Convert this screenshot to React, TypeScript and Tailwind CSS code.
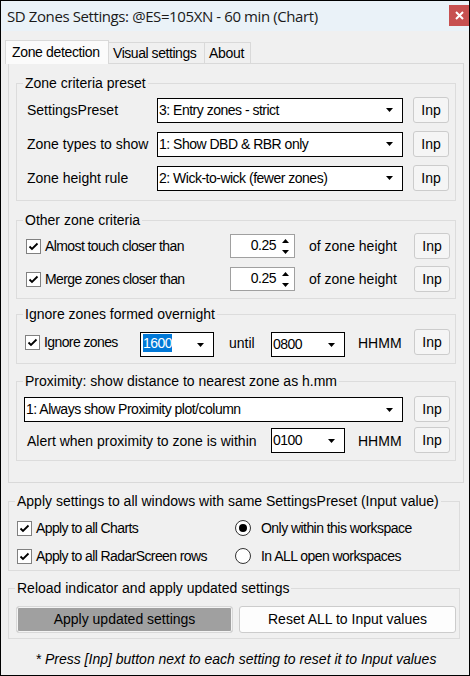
import React from "react";

const Tri = () => (
  <svg width="7" height="4" viewBox="0 0 7 4" className="shrink-0">
    <path d="M0 0H7L3.5 4Z" fill="#000" />
  </svg>
);

function Combo({ w, text, hl, top }: { w: string; text: string; hl?: boolean; top?: boolean }) {
  return (
    <div
      className={`${w} h-[25px] shrink-0 border border-black bg-white flex justify-between pr-[9px] ${
        top ? "pt-[1px]" : "items-center"
      }`}
    >
      <span
        className={`${hl ? "bg-[#0078d7] text-white ml-[2px] px-[0px] h-[18px] leading-[18px]" : "ml-[1px]"} tracking-[-0.5px] whitespace-nowrap`}
      >
        {text}
      </span>
      <div className={top ? "pt-[9px]" : ""}>
        <Tri />
      </div>
    </div>
  );
}

function Inp() {
  return (
    <div className="w-[36px] h-[26px] shrink-0 rounded-[3px] border border-[#cccccc] bg-[#f5f5f5] flex items-center justify-center">
      Inp
    </div>
  );
}

function Check() {
  return (
    <div className="w-[15px] h-[15px] shrink-0 border border-[#808080] bg-white flex items-center justify-center">
      <svg width="11" height="11" viewBox="0 0 11 11">
        <path d="M1.5 5.5L4 8L9.5 2.5" stroke="#000" strokeWidth="1.8" fill="none" />
      </svg>
    </div>
  );
}

function Radio({ on }: { on?: boolean }) {
  return (
    <div className="w-[16px] h-[16px] shrink-0 rounded-full border-[1.5px] border-[#333333] bg-white flex items-center justify-center">
      {on && <div className="w-[8px] h-[8px] rounded-full bg-black" />}
    </div>
  );
}

function Spinner() {
  return (
    <div className="w-[65px] h-[24px] shrink-0 border border-[#a0a0a0] bg-white flex items-center justify-end">
      <span className="tracking-[-0.5px] -mt-[2px]">0.25</span>
      <div className="w-[8px] ml-[5px] mr-[5px] flex flex-col items-center gap-[7px]">
        <svg width="7" height="4" viewBox="0 0 7 4">
          <path d="M0 4H7L3.5 0Z" fill="#000" />
        </svg>
        <svg width="7" height="4" viewBox="0 0 7 4">
          <path d="M0 0H7L3.5 4Z" fill="#000" />
        </svg>
      </div>
    </div>
  );
}

function Legend({ children }: { children: React.ReactNode }) {
  return <legend className="ml-[6px] px-[2px] leading-[16px] whitespace-nowrap">{children}</legend>;
}

export default function App() {
  return (
    <div className="w-[470px] h-[676px] border border-black bg-[#f0f0f0] flex flex-col text-black text-[14px] font-['Liberation_Sans',Arial,sans-serif] overflow-hidden">
      {/* title bar */}
      <div className="h-[30px] shrink-0 bg-[#eaf2f8] flex justify-between">
        <div className="pl-[6px] flex items-center text-[15px] font-['Open_Sans',sans-serif] text-[#1a1a1a] whitespace-nowrap tracking-[-0.4px]">
          SD Zones Settings: @ES=105XN - 60 min (Chart)
        </div>
        <div className="mt-[4px] w-[20px] h-[21px] bg-[#c75050] flex items-center justify-center">
          <svg width="9" height="9" viewBox="0 0 9 9">
            <path d="M1 1L8 8M8 1L1 8" stroke="#fff" strokeWidth="2" />
          </svg>
        </div>
      </div>

      <div className="pl-[7px] pr-[5px] flex flex-col">
        {/* tabs */}
        <div className="mt-[9px] flex items-end h-[24px] relative z-10 -mb-px">
          <div className="-ml-[3px] w-[104px] h-[24px] bg-[#fbfbfb] border border-b-0 border-[#d9d9d9] flex items-center pl-[6px] tracking-[-0.35px] whitespace-nowrap">
            Zone detection
          </div>
          <div className="w-[96px] h-[22px] border-t border-r border-[#d9d9d9] flex items-center pl-[4px] tracking-[-0.45px] whitespace-nowrap">
            Visual settings
          </div>
          <div className="w-[46px] h-[22px] border-t border-r border-[#d9d9d9] flex items-center pl-[4px] tracking-[-0.3px]">
            About
          </div>
        </div>

        {/* panel */}
        <div className="h-[420px] w-[456px] border border-[#d9d9d9] bg-[#f0f0f0] px-[7px] flex flex-col">
          {/* G1 */}
          <fieldset className="mt-[11px] border border-[#dcdcdc] pt-[6px] pb-[9px] flex flex-col gap-[8px]">
            <Legend>Zone criteria preset</Legend>
            {[
              ["SettingsPreset", "3: Entry zones - strict"],
              ["Zone types to show", "1: Show DBD & RBR only"],
              ["Zone height rule", "2: Wick-to-wick (fewer zones)"],
            ].map(([l, v]) => (
              <div key={l} className="h-[26px] flex items-center">
                <div className="w-[140px] pl-[10px] whitespace-nowrap">{l}</div>
                <Combo w="w-[246px]" text={v} />
                <div className="ml-[10px]">
                  <Inp />
                </div>
              </div>
            ))}
          </fieldset>

          {/* G2 */}
          <fieldset className="mt-[11px] border border-[#dcdcdc] pt-[5px] pb-[6px] flex flex-col gap-[7px]">
            <Legend>Other zone criteria</Legend>
            {["Almost touch closer than", "Merge zones closer than"].map((l) => (
              <div key={l} className="h-[26px] flex items-center pr-[5px]">
                <div className="w-[213px] pl-[9px] flex items-center gap-[4px]">
                  <Check />
                  <span className="tracking-[-0.6px] whitespace-nowrap">{l}</span>
                </div>
                <Spinner />
                <span className="ml-[14px] whitespace-nowrap">of zone height</span>
                <div className="ml-auto">
                  <Inp />
                </div>
              </div>
            ))}
          </fieldset>

          {/* G3 */}
          <fieldset className="mt-[7px] border border-[#dcdcdc] pt-[7px] pb-[8px]">
            <Legend>Ignore zones formed overnight</Legend>
            <div className="h-[26px] flex items-center pr-[5px]">
              <div className="w-[123px] pl-[8px] flex items-center gap-[4px]">
                <Check />
                <span className="tracking-[-0.6px] whitespace-nowrap">Ignore zones</span>
              </div>
              <div className="mt-[4px]">
                <Combo w="w-[74px]" text="1600" hl top />
              </div>
              <div className="w-[57px] pl-[15px] mt-[3px]">until</div>
              <div className="mt-[4px]">
                <Combo w="w-[74px]" text="0800" top />
              </div>
              <span className="ml-[13px] mt-[3px]">HHMM</span>
              <div className="ml-auto">
                <Inp />
              </div>
            </div>
          </fieldset>

          {/* G4 */}
          <fieldset className="mt-[9px] border border-[#dcdcdc] pt-[7px] pb-[7px] flex flex-col gap-[5px]">
            <Legend>Proximity: show distance to nearest zone as h.mm</Legend>
            <div className="h-[26px] flex items-center pr-[5px]">
              <div className="ml-[7px] mt-[1px]">
                <Combo w="w-[379px]" text="1: Always show Proximity plot/column" />
              </div>
              <div className="ml-auto">
                <Inp />
              </div>
            </div>
            <div className="h-[26px] flex items-center pr-[5px]">
              <div className="w-[254px] pl-[10px] mt-[3px] whitespace-nowrap">Alert when proximity to zone is within</div>
              <div className="mt-[1px]">
                <Combo w="w-[74px]" text="0100" top />
              </div>
              <span className="ml-[13px] mt-[3px]">HHMM</span>
              <div className="ml-auto">
                <Inp />
              </div>
            </div>
          </fieldset>
        </div>

        {/* G5 */}
        <fieldset className="mt-[10px] w-[452px] border border-[#dcdcdc] pt-[9px] pb-[4px] flex flex-col gap-[8px]">
          <Legend>Apply settings to all windows with same SettingsPreset (Input value)</Legend>
          <div className="h-[20px] flex items-center">
            <div className="w-[226px] pl-[8px] flex items-center gap-[4px]">
              <Check />
              <span className="tracking-[-0.6px] whitespace-nowrap">Apply to all Charts</span>
            </div>
            <Radio on />
            <span className="ml-[10px] tracking-[-0.55px] whitespace-nowrap">Only within this workspace</span>
          </div>
          <div className="h-[20px] flex items-center">
            <div className="w-[226px] pl-[8px] flex items-center gap-[4px]">
              <Check />
              <span className="tracking-[-0.6px] whitespace-nowrap">Apply to all RadarScreen rows</span>
            </div>
            <Radio />
            <span className="ml-[10px] tracking-[-0.55px] whitespace-nowrap">In ALL open workspaces</span>
          </div>
        </fieldset>

        {/* G6 */}
        <fieldset className="mt-[9px] w-[452px] border border-[#dcdcdc] pt-[10px] pb-[5px]">
          <Legend>Reload indicator and apply updated settings</Legend>
          <div className="flex pl-[7px] gap-[6px]">
            <div className="w-[217px] h-[27px] rounded-[3px] border border-[#d8d8d8] bg-[#a0a0a0] shadow-[inset_0_0_0_1px_#f4f4f4] flex items-center justify-center">
              Apply updated settings
            </div>
            <div className="w-[217px] h-[27px] rounded-[3px] border border-[#cccccc] bg-[#fdfdfd] flex items-center justify-center">
              Reset ALL to Input values
            </div>
          </div>
        </fieldset>

        <div className="mt-[12px] w-[456px] text-center italic leading-[16px] whitespace-nowrap">
          * Press [Inp] button next to each setting to reset it to Input values
        </div>
      </div>
    </div>
  );
}
